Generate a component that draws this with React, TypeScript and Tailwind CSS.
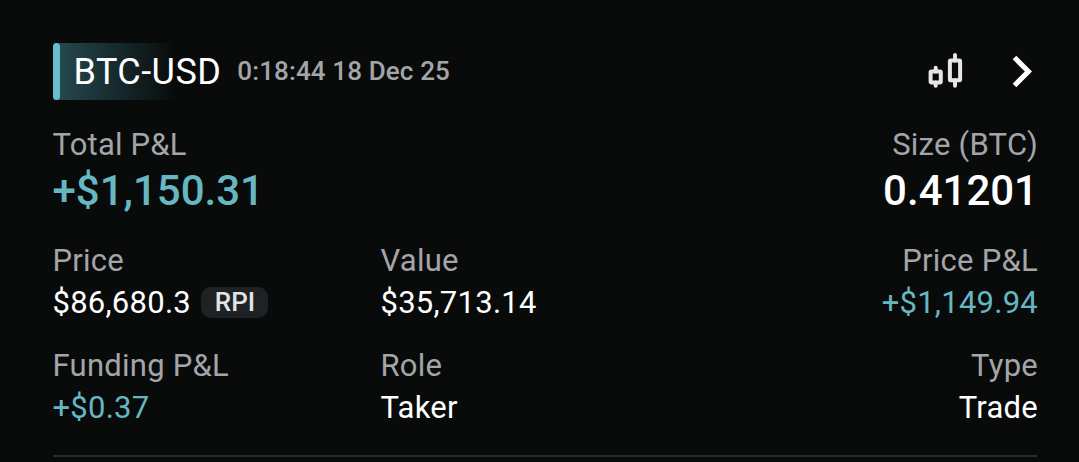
import { FunctionComponent } from 'react';

interface StatProps {
  label: string;
  value: string;
  tag?: string;
  positive?: boolean;
  alignRight?: boolean;
}

const Stat: FunctionComponent<StatProps> = ({ label, value, tag, positive, alignRight }: StatProps) => {
  return (
    <div className={alignRight ? '-mr-px text-right' : '-ml-[0.5px] text-left'}>
      <dt className="h-[42px] text-[31px] leading-[42px] tracking-[0.25px] text-[#a4a5a9]">{label}</dt>
      <dd
        className={`flex h-[42px] items-center text-[31px] leading-[42px] tracking-[0.25px] ${
          alignRight ? 'justify-end' : ''
        } ${positive ? 'text-[#67b7c3]' : 'text-white'}`}
      >
        {value}
        {tag && (
          <span className="mb-0.5 ml-[10.5px] flex h-[31px] w-[67px] items-center justify-center rounded-[10px] bg-[#1e2225] text-[26px] font-medium tracking-normal text-[#e4e4e5]">
            {tag}
          </span>
        )}
      </dd>
    </div>
  );
};

const CandlesIcon = () => (
  <svg className="h-[37px] w-9" viewBox="0 0 36 37" fill="none" stroke="#e6e6e6" strokeWidth="4">
    <rect x="2.6" y="18.6" width="10.2" height="10.8" rx="0.8" />
    <path d="M7.7 14.8v3.8M7.7 29.4v3.4" strokeLinecap="round" />
    <rect x="21.9" y="7.6" width="10.2" height="19.6" rx="0.8" />
    <path d="M27 2v5.6M27 27.2v5.6" strokeLinecap="round" />
  </svg>
);

const App = () => {
  return (
    <main className="h-[462px] w-[1079px] overflow-hidden bg-[#090b0b] pl-[53px] pr-[42px] pt-[43px] font-[Roboto,sans-serif]">
      <header className="flex h-[57px] items-center">
        <div className="flex h-full items-center bg-linear-to-r from-[#264b51] to-transparent to-[122px] rounded-[4px]">
          <span className="h-full w-[7px] rounded-full bg-[#66bfcb]" />
          <h1 className="pl-[13.5px] text-[36px] tracking-[0.45px] text-white">BTC-USD</h1>
        </div>
        <time className="ml-[16px] text-[26px] font-medium tracking-[0.12px] text-[#a4a5a9]">0:18:44 18 Dec 25</time>
        <div className="ml-auto mr-[5px] flex items-center">
          <CandlesIcon />
          <svg className="ml-12 h-[33px] w-5" viewBox="0 0 20 33" fill="none" stroke="white" strokeWidth="5.1">
            <path d="M2.5 2.5l13.9 14L2.5 30.5" />
          </svg>
        </div>
      </header>
      <div className="mt-[25px] flex justify-between">
        <div className="-ml-[0.5px]">
          <div className="text-[31px] leading-[40px] tracking-[0.2px] text-[#a4a5a9]">Total P&amp;L</div>
          <div className="text-[42px] font-medium leading-[52px] text-[#67b7c3]">+$1,150.31</div>
        </div>
        <div className="-mr-px text-right">
          <div className="text-[31px] leading-[40px] tracking-[0.25px] text-[#a4a5a9]">Size (BTC)</div>
          <div className="text-[42px] font-medium leading-[52px] text-white">0.41201</div>
        </div>
      </div>
      <dl className="mt-[23px] grid grid-cols-3 gap-y-[21px] border-b-2 border-[#2b2c31] pb-[26px]">
        <Stat label="Price" value="$86,680.3" tag="RPI" />
        <Stat label="Value" value="$35,713.14" />
        <Stat label="Price P&L" value="+$1,149.94" positive alignRight />
        <Stat label="Funding P&L" value="+$0.37" positive />
        <Stat label="Role" value="Taker" />
        <Stat label="Type" value="Trade" alignRight />
      </dl>
    </main>
  );
};

export default App;
